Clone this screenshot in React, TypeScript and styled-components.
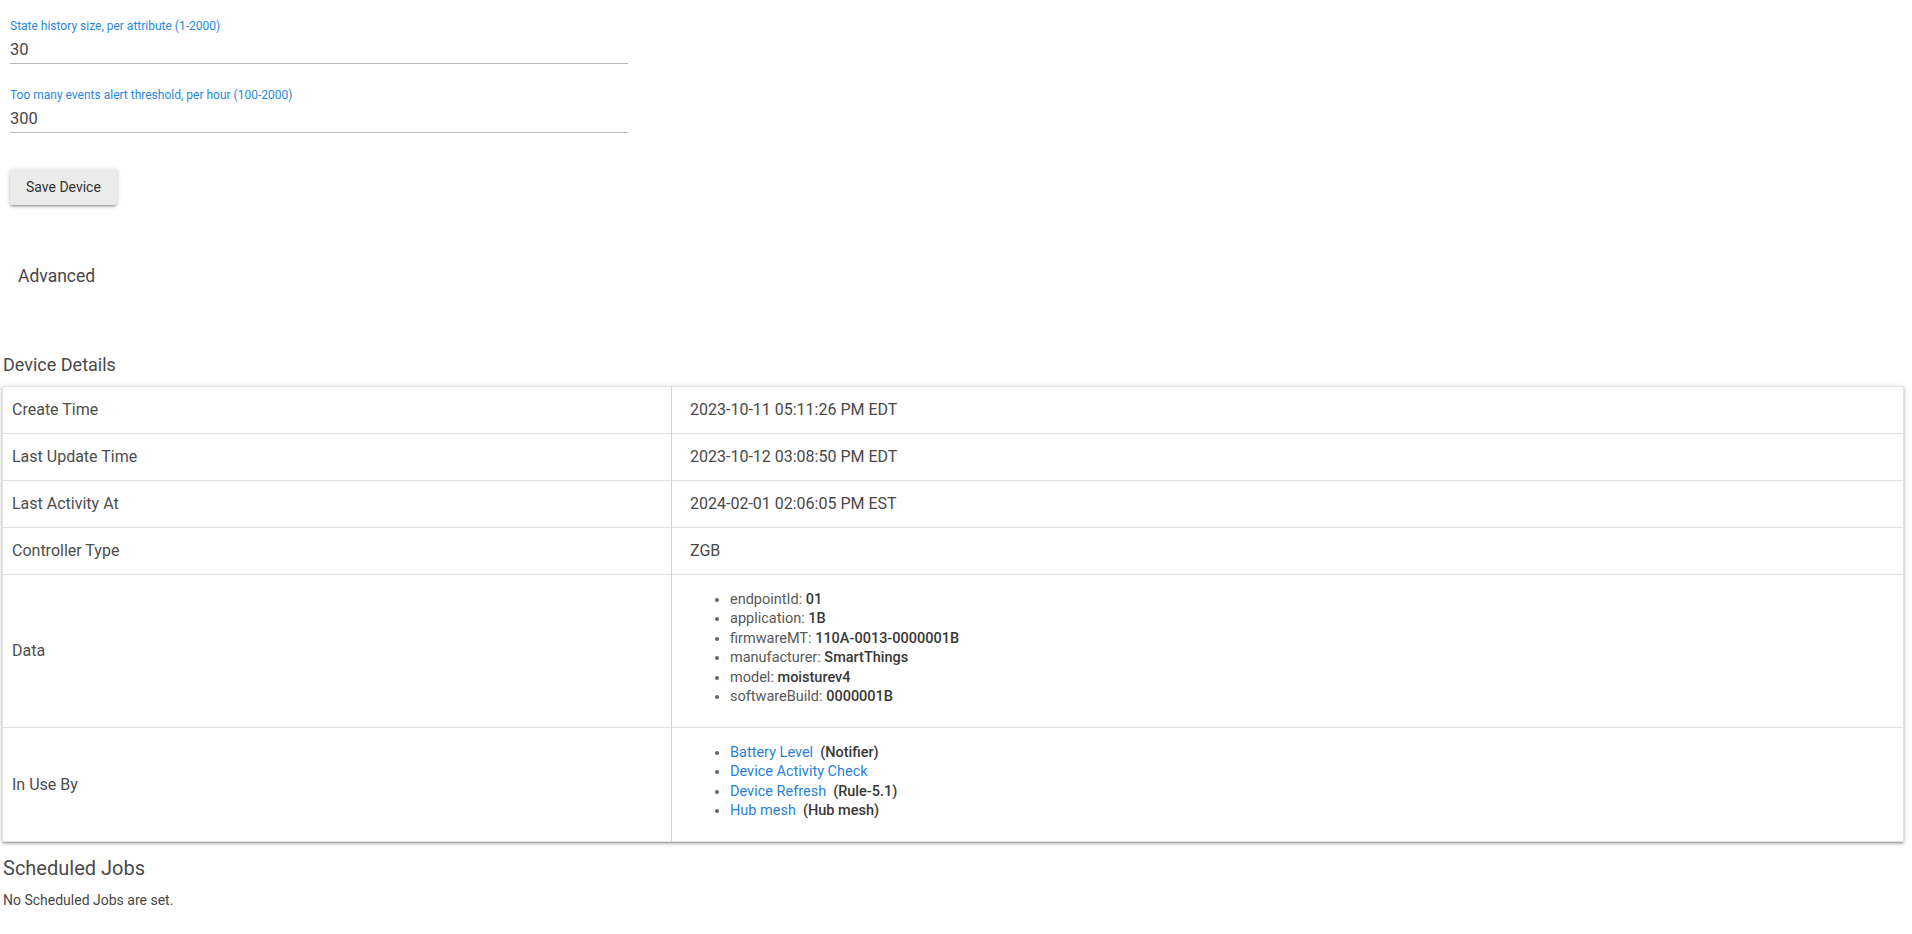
import React from "react";
import styled, { createGlobalStyle } from "styled-components";

const GlobalStyle = createGlobalStyle`
  html, body {
    margin: 0;
    padding: 0;
    background: #ffffff;
  }
  body {
    font-family: Roboto, "Noto Sans", "Liberation Sans", sans-serif;
    color: #444;
  }
`;

const Page = styled.div`
  padding: 19px 8px 0 2px;
  width: 1902px;
`;

const Form = styled.div`
  display: flex;
  flex-direction: column;
  gap: 24px;
  padding-left: 8px;
  width: 618px;
`;

const Field = styled.label`
  display: flex;
  flex-direction: column;
`;

const FieldLabel = styled.span`
  font-size: 12px;
  line-height: 14px;
  color: #2888dc;
  margin-bottom: 4px;
`;

const FieldInput = styled.input`
  font-family: inherit;
  font-size: 16.5px;
  line-height: 24px;
  height: 25px;
  padding: 0 0 1px 0;
  border: none;
  border-bottom: 1px solid #b8b8b8;
  outline: none;
  color: #474747;
  background: transparent;
`;

const SaveButton = styled.button`
  margin: 36px 0 0 8px;
  height: 36px;
  padding: 0 16px;
  border: none;
  border-radius: 2px;
  background: #ebebeb;
  color: #333;
  font-family: inherit;
  font-size: 14px;
  cursor: pointer;
  box-shadow: 0 2px 2px 0 rgba(0, 0, 0, 0.14), 0 3px 1px -2px rgba(0, 0, 0, 0.12),
    0 1px 5px 0 rgba(0, 0, 0, 0.2);
`;

const Collapsible = styled.div`
  margin-top: 59px;
  padding-left: 16px;
  font-size: 17.5px;
  line-height: 24px;
  color: #474747;
`;

const SectionTitle = styled.h2<{ $size: number; $top: number }>`
  margin: ${(p) => p.$top}px 0 0 1px;
  font-weight: 400;
  font-size: ${(p) => p.$size}px;
  line-height: ${(p) => Math.round(p.$size * 1.35)}px;
  color: #4a4a4a;
`;

const DetailsTable = styled.table`
  margin-top: 9px;
  width: 100%;
  border-collapse: collapse;
  border: 1px solid #e0e0e0;
  box-shadow: 0 2px 2px 0 rgba(0, 0, 0, 0.14), 0 3px 1px -2px rgba(0, 0, 0, 0.12),
    0 1px 5px 0 rgba(0, 0, 0, 0.2);
`;

const Row = styled.tr`
  border-bottom: 1px solid #e0e0e0;
  &:last-child {
    border-bottom: none;
  }
`;

const KeyCell = styled.td`
  width: 650px;
  padding: 11px 9px;
  font-size: 16px;
  line-height: 24px;
  color: #4d4d4d;
  vertical-align: middle;
`;

const ValueCell = styled.td`
  padding: 11px 9px 11px 18px;
  border-left: 1px solid #d4d4d4;
  font-size: 16px;
  line-height: 24px;
  color: #484848;
  vertical-align: middle;
`;

const InfoList = styled.ul`
  margin: 3.5px 0 9.5px;
  padding-left: 40px;
  font-size: 14.5px;
  line-height: 19.5px;
  color: #585858;

  li::marker {
    color: #666;
  }
`;

const Strong = styled.span`
  font-weight: 500;
  color: #383838;
`;

const AppLink = styled.a`
  color: #2a7fd4;
  text-decoration: none;
  margin-right: 7px;
`;

const Note = styled.p`
  margin: 8px 0 0 1px;
  font-size: 14px;
  line-height: 20px;
  color: #474747;
`;

const times: [string, string][] = [
  ["Create Time", "2023-10-11 05:11:26 PM EDT"],
  ["Last Update Time", "2023-10-12 03:08:50 PM EDT"],
  ["Last Activity At", "2024-02-01 02:06:05 PM EST"],
  ["Controller Type", "ZGB"],
];

const data: [string, string][] = [
  ["endpointId", "01"],
  ["application", "1B"],
  ["firmwareMT", "110A-0013-0000001B"],
  ["manufacturer", "SmartThings"],
  ["model", "moisturev4"],
  ["softwareBuild", "0000001B"],
];

const apps: { name: string; kind?: string }[] = [
  { name: "Battery Level", kind: "Notifier" },
  { name: "Device Activity Check" },
  { name: "Device Refresh", kind: "Rule-5.1" },
  { name: "Hub mesh", kind: "Hub mesh" },
];

export default function App() {
  return (
    <Page>
      <GlobalStyle />
      <Form>
        <Field>
          <FieldLabel>State history size, per attribute (1-2000)</FieldLabel>
          <FieldInput defaultValue="30" />
        </Field>
        <Field>
          <FieldLabel>Too many events alert threshold, per hour (100-2000)</FieldLabel>
          <FieldInput defaultValue="300" />
        </Field>
      </Form>
      <SaveButton>Save Device</SaveButton>
      <Collapsible>Advanced</Collapsible>

      <SectionTitle $size={18} $top={65}>
        Device Details
      </SectionTitle>
      <DetailsTable>
        <tbody>
          {times.map(([k, v]) => (
            <Row key={k}>
              <KeyCell>{k}</KeyCell>
              <ValueCell>{v}</ValueCell>
            </Row>
          ))}
          <Row>
            <KeyCell>Data</KeyCell>
            <ValueCell>
              <InfoList>
                {data.map(([k, v]) => (
                  <li key={k}>
                    {k}: <Strong>{v}</Strong>
                  </li>
                ))}
              </InfoList>
            </ValueCell>
          </Row>
          <Row>
            <KeyCell>In Use By</KeyCell>
            <ValueCell>
              <InfoList>
                {apps.map((a) => (
                  <li key={a.name}>
                    <AppLink href="#">{a.name}</AppLink>
                    {a.kind && <Strong>({a.kind})</Strong>}
                  </li>
                ))}
              </InfoList>
            </ValueCell>
          </Row>
        </tbody>
      </DetailsTable>

      <SectionTitle $size={20} $top={13}>
        Scheduled Jobs
      </SectionTitle>
      <Note>No Scheduled Jobs are set.</Note>
    </Page>
  );
}
